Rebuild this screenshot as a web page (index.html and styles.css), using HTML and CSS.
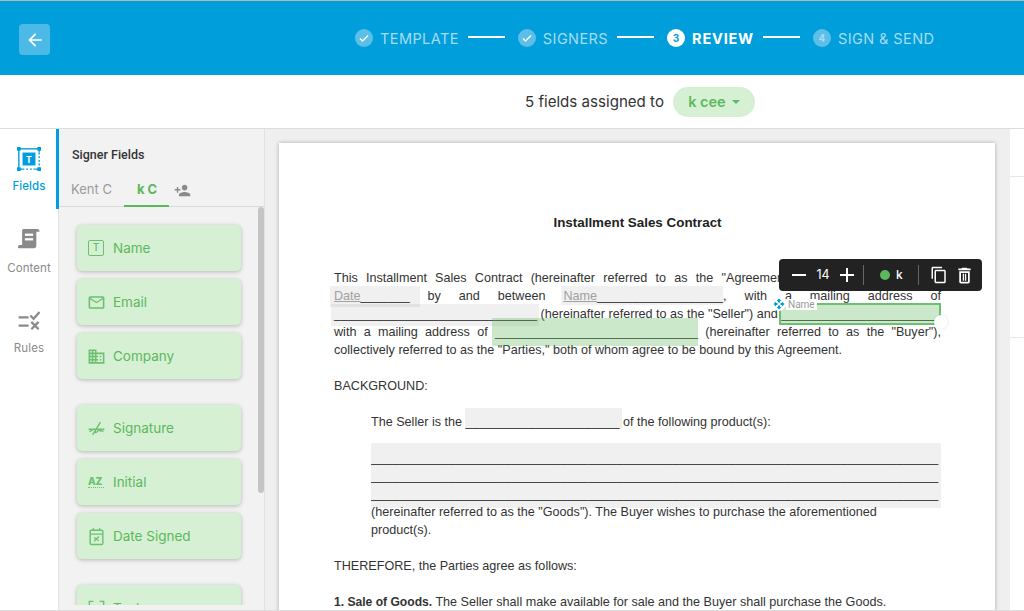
FILE: index.html
```html
<!DOCTYPE html>
<html lang="en">
<head>
    <meta charset="UTF-8">
    <meta name="viewport" content="width=device-width, initial-scale=1.0">
    <title>Review</title>
    <link rel="stylesheet" href="styles.css">
</head>
<body>
<div class="page">

    <header class="topbar">
        <button class="back-btn">
            <svg width="20" height="20" viewBox="0 0 24 24" fill="#fff"><path d="M20 11H7.830l5.590-5.590L12 4l-8 8 8 8 1.410-1.410L7.830 13H20z"/></svg>
        </button>
        <nav class="steps">
            <div class="step">
                <span class="step-dot"><svg width="12" height="12" viewBox="0 0 24 24" fill="#fff"><path d="M9 16.200 4.800 12l-1.900 1.900L9 20 21 8l-1.900-1.900z"/></svg></span>
                <span class="step-name">TEMPLATE</span>
            </div>
            <span class="step-line"></span>
            <div class="step">
                <span class="step-dot"><svg width="12" height="12" viewBox="0 0 24 24" fill="#fff"><path d="M9 16.200 4.800 12l-1.900 1.900L9 20 21 8l-1.900-1.900z"/></svg></span>
                <span class="step-name">SIGNERS</span>
            </div>
            <span class="step-line"></span>
            <div class="step active">
                <span class="step-dot">3</span>
                <span class="step-name">REVIEW</span>
            </div>
            <span class="step-line"></span>
            <div class="step">
                <span class="step-dot">4</span>
                <span class="step-name">SIGN &amp; SEND</span>
            </div>
        </nav>
    </header>

    <div class="assign-bar">
        <span class="assign-text">5 fields assigned to</span>
        <span class="assign-pill">k cee <i class="caret"></i></span>
    </div>

    <main class="workspace">
        <aside class="side-nav">
            <div class="nav-item active">
                <svg width="24" height="24" viewBox="0 0 26 26">
                    <rect x="2" y="2" width="22" height="22" fill="none" stroke="#009fdb" stroke-width="1.500"/>
                    <path d="M24 6v16M6 24h14" stroke="#fff" stroke-width="2.500"/>
                    <path d="M24 6v16M6 24h14" stroke="#009fdb" stroke-width="1.500" stroke-dasharray="2 2"/>
                    <rect x="0" y="0" width="4" height="4" fill="#009fdb"/>
                    <rect x="22" y="0" width="4" height="4" fill="#009fdb"/>
                    <rect x="0" y="22" width="4" height="4" fill="#009fdb"/>
                    <rect x="22" y="22" width="4" height="4" fill="#009fdb"/>
                    <rect x="6" y="6" width="14" height="14" fill="#009fdb"/>
                    <text x="13" y="17" font-size="10" font-weight="700" text-anchor="middle" fill="#fff" font-family="Roboto, sans-serif">T</text>
                </svg>
                <span>Fields</span>
            </div>
            <div class="nav-item">
                <svg width="22" height="24" viewBox="0 0 24 26" fill="#8a8a8a">
                    <path d="M6 1h15c1.500 0 2.500 1 2.500 3h-3.500v15c0 1-.5 3-2.500 3H1c-1 0-1.500-1-1-2 .5-1 1.500-1.500 3-1.500h1.500V3C4.500 2 5 1 6 1z"/>
                    <rect x="7.500" y="6" width="9" height="2.500" fill="#fff"/>
                    <rect x="7.500" y="11" width="9" height="2.500" fill="#fff"/>
                </svg>
                <span>Content</span>
            </div>
            <div class="nav-item last">
                <svg width="25" height="20" viewBox="0 0 26 22" fill="none" stroke="#8a8a8a" stroke-width="2.500">
                    <path d="M1 7h11M1 16h11M14 5l3.500 3.500L24 1M15 12l8 8M23 12l-8 8"/>
                </svg>
                <span>Rules</span>
            </div>
        </aside>

        <section class="fields-panel">
            <h3 class="panel-title">Signer Fields</h3>
            <div class="tabs">
                <span class="tab">Kent C</span>
                <span class="tab active">k C</span>
                <svg class="tab-add" width="17" height="17" viewBox="0 0 24 24" fill="#8a8a8a"><path d="M15 12c2.210 0 4-1.790 4-4s-1.790-4-4-4-4 1.790-4 4 1.790 4 4 4zm-9-2V7H4v3H1v2h3v3h2v-3h3v-2H6zm9 4c-2.670 0-8 1.340-8 4v2h16v-2c0-2.660-5.330-4-8-4z"/></svg>
            </div>
            <div class="field-list">
                <div class="field-group">
                    <div class="field-card"><span class="icon-box">T</span>Name</div>
                    <div class="field-card">
                        <svg class="field-icon" viewBox="0 0 24 24" fill="#6cc070"><path d="M20 4H4c-1.100 0-2 .9-2 2v12c0 1.100.9 2 2 2h16c1.100 0 2-.9 2-2V6c0-1.100-.9-2-2-2zm0 14H4V8l8 5 8-5v10zm-8-7L4 6h16l-8 5z"/></svg>
                        Email
                    </div>
                    <div class="field-card">
                        <svg class="field-icon" viewBox="0 0 24 24" fill="#6cc070"><path d="M12 7V3H2v18h20V7H12zM6 19H4v-2h2v2zm0-4H4v-2h2v2zm0-4H4V9h2v2zm0-4H4V5h2v2zm4 12H8v-2h2v2zm0-4H8v-2h2v2zm0-4H8V9h2v2zm0-4H8V5h2v2zm10 12h-8v-2h2v-2h-2v-2h2v-2h-2V9h8v10zm-2-8h-2v2h2v-2zm0 4h-2v2h2v-2z"/></svg>
                        Company
                    </div>
                </div>
                <div class="field-group">
                    <div class="field-card">
                        <svg class="field-icon" viewBox="0 0 24 24" fill="none" stroke="#6cc070" stroke-width="1.800"><path d="M2 13h20M7 20 17 4M3 16c3-1 5-4 7-3s-1 4 1 4 4-4 5-3 1 2 5 1"/></svg>
                        Signature
                    </div>
                    <div class="field-card"><span class="icon-text">AZ</span>Initial</div>
                    <div class="field-card">
                        <svg class="field-icon" viewBox="0 0 24 24" fill="none" stroke="#6cc070" stroke-width="1.800"><rect x="4" y="4" width="16" height="18" rx="1.500"/><path d="M4 9h16M8 1.500V5M16 1.500V5M9 18l6-6M9 14c2 0 4 3 6 3"/></svg>
                        Date Signed
                    </div>
                </div>
                <div class="field-group">
                    <div class="field-card">
                        <svg class="field-icon" viewBox="0 0 24 24" fill="none" stroke="#6cc070" stroke-width="1.800"><path d="M3 8V3h5M16 3h5v5"/></svg>
                        Text
                    </div>
                </div>
            </div>
            <div class="panel-scroll"></div>
        </section>

        <section class="doc-area">
            <article class="doc">
                <h1 class="doc-title">Installment Sales Contract</h1>

                <div class="para">
                    <div class="line fit">This Installment Sales Contract (hereinafter referred to as the "Agreement") is entered into on the</div>
                    <div class="line fit"><span class="ph">Date</span>_______ by and between <span class="ph">Name</span>__________________, with a mailing address of</div>
                    <div class="line">_____________________________ (hereinafter referred to as the "Seller") and ______________________</div>
                    <div class="line fit">with a mailing address of _____________________________ (hereinafter referred to as the "Buyer"),</div>
                    <div class="line">collectively referred to as the "Parties," both of whom agree to be bound by this Agreement.</div>
                </div>

                <div class="para">BACKGROUND:</div>

                <div class="para indent">The Seller is the ______________________ of the following product(s):</div>

                <div class="para indent">
                    <div class="line rule">_________________________________________________________________________________</div>
                    <div class="line rule">_________________________________________________________________________________</div>
                    <div class="line rule">_________________________________________________________________________________</div>
                    <div class="line">(hereinafter referred to as the "Goods"). The Buyer wishes to purchase the aforementioned</div>
                    <div class="line">product(s).</div>
                </div>

                <div class="para">THEREFORE, the Parties agree as follows:</div>

                <div class="para"><b>1. Sale of Goods.</b> The Seller shall make available for sale and the Buyer shall purchase the Goods.</div>

                <!-- fields placed over the document -->
                <div class="fld fld-date"></div>
                <div class="fld fld-name"></div>
                <div class="fld fld-seller"></div>
                <div class="fld fld-owner"></div>
                <div class="fld fld-product"></div>
                <div class="fld-buyer"></div>
                <div class="fld-selected"></div>
                <div class="fld-handle"></div>
                <div class="fld-tag">Name</div>
                <div class="fld-move">
                    <svg width="12" height="12" viewBox="0 0 24 24" fill="#009fdb"><path d="M10 9h4V6h3l-5-5-5 5h3v3zm-1 1H6V7l-5 5 5 5v-3h3v-4zm14 2-5-5v3h-3v4h3v3l5-5zm-9 3h-4v3H7l5 5 5-5h-3v-3z"/></svg>
                </div>

                <div class="toolbar">
                    <svg class="tool-minus" width="14" height="14" viewBox="0 0 14 14"><path d="M0 7h14" stroke="#fff" stroke-width="2"/></svg>
                    <span class="tool-size">14</span>
                    <svg class="tool-plus" width="14" height="14" viewBox="0 0 14 14"><path d="M0 7h14M7 0v14" stroke="#fff" stroke-width="2"/></svg>
                    <span class="tool-sep sep-a"></span>
                    <span class="tool-dot"></span>
                    <span class="tool-signer">k</span>
                    <span class="tool-sep sep-b"></span>
                    <svg class="tool-copy" width="18" height="18" viewBox="0 0 24 24" fill="#fff"><path d="M16 1H4c-1.100 0-2 .9-2 2v14h2V3h12V1zm3 4H8c-1.100 0-2 .9-2 2v14c0 1.100.9 2 2 2h11c1.100 0 2-.9 2-2V7c0-1.100-.9-2-2-2zm0 16H8V7h11v14z"/></svg>
                    <svg class="tool-trash" width="21" height="21" viewBox="0 0 24 24" fill="#fff"><path d="M6 19c0 1.100.9 2 2 2h8c1.100 0 2-.9 2-2V7H6v12zM8 9h8v10H8V9zm7.500-5-1-1h-5l-1 1H5v2h14V4zM10 10h1.500v8H10zM12.500 10H14v8h-1.500z"/></svg>
                </div>
            </article>
        </section>

        <aside class="right-rail">
            <div class="rail-row"></div>
            <div class="rail-row"></div>
        </aside>
    </main>
</div>
</body>
</html>
```

FILE: styles.css
```css
* {
    box-sizing: border-box;
}
html, body {
    margin: 0;
    padding: 0;
    height: 611px;
    overflow: hidden;
}
body {
    font-family: "Inter", "Open Sans", sans-serif;
    background-color: #fff;
    color: #333;
}
.page {
    height: 611px;
    display: flex;
    flex-direction: column;
    border-top: 1px solid #b5b5b5;
    border-bottom: 1px solid #ddd;
    overflow: hidden;
}

/* top bar */
.topbar {
    height: 74px;
    flex: none;
    background-color: #009fdb;
    display: flex;
    align-items: center;
    padding: 0 0 0 19px;
}
.back-btn {
    width: 31px;
    height: 31px;
    margin-top: 3px;
    border: none;
    border-radius: 4px;
    background-color: #4db9e6;
    display: flex;
    align-items: center;
    justify-content: center;
    padding: 0;
}
.steps {
    display: flex;
    align-items: center;
    margin-left: 305px;
}
.step {
    display: flex;
    align-items: center;
    gap: 7px;
    color: #a6dcf3;
    font-size: 14.5px;
    letter-spacing: 0.42px;
}
.step-dot {
    width: 18px;
    height: 18px;
    border-radius: 50%;
    background-color: #5dbfe8;
    color: #a6dcf3;
    font-size: 10px;
    font-weight: 700;
    letter-spacing: 0;
    display: flex;
    align-items: center;
    justify-content: center;
}
.step.active {
    color: #fff;
    font-weight: 700;
    letter-spacing: 0.8px;
}
.step.active .step-dot {
    background-color: #fff;
    color: #009fdb;
}
.step-line {
    width: 37px;
    height: 2px;
    margin: 0 13px 2px 9px;
    background-color: #fff;
}

/* assignment bar */
.assign-bar {
    height: 54px;
    flex: none;
    display: flex;
    align-items: center;
    padding-left: 525px;
    gap: 9px;
    border-bottom: 1px solid #ddd;
}
.assign-text {
    font-size: 15.1px;
    color: #333;
}
.assign-pill {
    width: 82px;
    height: 30px;
    border-radius: 15px;
    background-color: #d6f0d4;
    color: #5cb85c;
    font-size: 14.5px;
    font-weight: 600;
    display: flex;
    align-items: center;
    justify-content: center;
    gap: 6px;
}
.caret {
    width: 0;
    height: 0;
    border-left: 4px solid transparent;
    border-right: 4px solid transparent;
    border-top: 4px solid #5cb85c;
}

/* main area */
.workspace {
    flex: 1;
    min-height: 0;
    display: flex;
}
.side-nav {
    width: 59px;
    flex: none;
    border-right: 1px solid #e2e2e2;
    background-color: #fff;
}
.nav-item {
    height: 80px;
    display: flex;
    flex-direction: column;
    align-items: center;
    gap: 10px;
    padding-top: 19px;
    font-size: 11.5px;
    letter-spacing: 0.1px;
    line-height: 13px;
    color: #8a8a8a;
}
.nav-item.active {
    gap: 9px;
    padding: 18px 0 0 2px;
    color: #009fdb;
    font-weight: 500;
    border-right: 3px solid #009fdb;
    margin-right: -1px;
}
.nav-item.last {
    padding-top: 22px;
    gap: 11px;
}

/* signer fields panel */
.fields-panel {
    width: 206px;
    flex: none;
    position: relative;
    background-color: #f2f2f2;
    border-right: 1px solid #e2e2e2;
    display: flex;
    flex-direction: column;
    padding-bottom: 5px;
}
.panel-title {
    margin: 0;
    padding: 19px 0 0 13px;
    font-family: "Roboto", sans-serif;
    font-size: 12.5px;
    font-weight: 500;
    line-height: 14px;
    color: #333;
}
.tabs {
    height: 45px;
    flex: none;
    display: flex;
    align-items: center;
    border-bottom: 1px solid #d8d8d8;
}
.tab {
    height: 45px;
    padding: 18px 12px 0;
    font-size: 13px;
    line-height: 18px;
    color: #9a9a9a;
    white-space: nowrap;
}
.tab.active {
    width: 45px;
    padding: 18px 0 0 13px;
    color: #5cb85c;
    font-weight: 700;
    border-bottom: 2px solid #5cb85c;
}
.tab-add {
    margin: 12px 0 0 5px;
}
.field-list {
    flex: 1;
    min-height: 0;
    overflow: hidden;
    padding: 18px 0 0 18px;
}
.field-group {
    display: flex;
    flex-direction: column;
    gap: 8px;
    margin-bottom: 26px;
}
.field-card {
    width: 164px;
    height: 46px;
    flex: none;
    border-radius: 5px;
    background-color: #d6f0d4;
    color: #5cb85c;
    font-size: 13.5px;
    display: flex;
    align-items: center;
    padding-left: 11px;
    gap: 9px;
    box-shadow: 0 1px 4px rgba(0, 0, 0, 0.25);
}
.field-icon {
    width: 19px;
    height: 19px;
    flex: none;
    margin: 0 -1.5px;
}
.icon-box {
    width: 16px;
    height: 16px;
    flex: none;
    border: 1.5px solid #6cc070;
    border-radius: 2px;
    color: #6cc070;
    font-family: "Roboto", sans-serif;
    font-size: 10px;
    font-weight: 500;
    line-height: 13px;
    text-align: center;
}
.icon-text {
    width: 16px;
    flex: none;
    color: #6cc070;
    font-size: 10px;
    font-weight: 800;
    letter-spacing: -0.3px;
    border-bottom: 1px dotted #6cc070;
    line-height: 11px;
}
.panel-scroll {
    position: absolute;
    right: 0;
    top: 78px;
    width: 6px;
    height: 286px;
    border-radius: 3px;
    background-color: #c4c4c4;
}

/* document */
.doc-area {
    width: 745px;
    flex: none;
    background-color: #efefef;
    padding: 14px 0 0 14px;
    overflow: hidden;
}
.doc {
    position: relative;
    width: 716px;
    height: 600px;
    padding: 71px 54px 0 55px;
    background-color: #fff;
    box-shadow: 0 0 4px rgba(0, 0, 0, 0.3);
    font-family: "Liberation Sans", Arial, sans-serif;
    font-size: 12.6px;
    line-height: 18px;
    color: #333;
}
.doc-title {
    margin: 0 0 37px;
    font-size: 13.4px;
    line-height: 18px;
    font-weight: 700;
    text-align: center;
    color: #222;
}
.doc b {
    font-size: 12.1px;
}
.para {
    margin-bottom: 18px;
}
.para.indent {
    padding-left: 37px;
}
.line {
    white-space: nowrap;
}
.line.fit {
    white-space: normal;
    text-align: justify;
    text-align-last: justify;
}
.line.rule {
    overflow: hidden;
}
.ph {
    color: #aaa;
    text-decoration: underline;
}

/* fields over the document */
.fld {
    position: absolute;
    background-color: rgba(0, 0, 0, 0.06);
}
.fld-date { left: 51px; top: 143px; width: 90px; height: 21px; }
.fld-name { left: 282px; top: 143px; width: 162px; height: 19px; }
.fld-seller { left: 52px; top: 161px; width: 208px; height: 22px; }
.fld-owner { left: 186px; top: 265px; width: 157px; height: 21px; }
.fld-product { left: 92px; top: 300px; width: 570px; height: 65px; }
.fld-buyer {
    position: absolute;
    left: 213px;
    top: 175px;
    width: 206px;
    height: 28px;
    background-color: rgba(92, 184, 92, 0.32);
}
.fld-selected {
    position: absolute;
    left: 500px;
    top: 160px;
    width: 162px;
    height: 22px;
    background-color: rgba(92, 184, 92, 0.32);
    border: 2px solid #6cc070;
}
.fld-handle {
    position: absolute;
    left: 655px;
    top: 172px;
    width: 14px;
    height: 14px;
    border-radius: 50%;
    background-color: #fff;
    box-shadow: 0 0 2px rgba(0, 0, 0, 0.15);
}
.fld-tag {
    position: absolute;
    left: 507px;
    top: 156px;
    height: 11px;
    padding: 0 2px;
    background-color: #fff;
    font-family: "Roboto", sans-serif;
    font-size: 10px;
    line-height: 11px;
    color: #9a9a9a;
}
.fld-move {
    position: absolute;
    left: 493px;
    top: 154px;
    width: 14px;
    height: 14px;
    border-radius: 50%;
    background-color: #fff;
    display: flex;
    align-items: center;
    justify-content: center;
}
.toolbar {
    position: absolute;
    left: 500px;
    top: 116px;
    width: 203px;
    height: 32px;
    border-radius: 4px;
    background-color: #222;
    color: #fff;
    font-family: "Inter", sans-serif;
    display: flex;
    align-items: center;
    padding-left: 13px;
}
.tool-size {
    width: 34px;
    font-size: 12.5px;
    text-align: center;
}
.tool-sep {
    width: 1px;
    height: 20px;
    background-color: #666;
}
.sep-a {
    margin-left: 9px;
}
.tool-dot {
    width: 10px;
    height: 10px;
    margin-left: 16px;
    border-radius: 50%;
    background-color: #5cb85c;
}
.tool-signer {
    margin-left: 6px;
    font-size: 12px;
    font-weight: 500;
}
.sep-b {
    margin-left: 15px;
}
.tool-copy {
    margin-left: 11px;
}
.tool-trash {
    margin-left: 6px;
}

/* right rail */
.right-rail {
    flex: 1;
    background-color: #fff;
    padding-top: 47px;
}
.rail-row {
    height: 161px;
    border-top: 1px solid #e6e6e6;
}
```
